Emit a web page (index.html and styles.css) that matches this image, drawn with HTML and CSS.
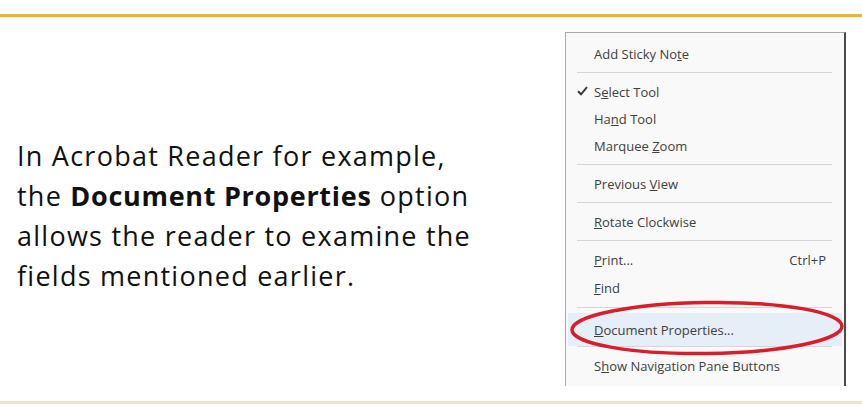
FILE: index.html
```html
<!DOCTYPE html>
<html>
<head>
<meta charset="utf-8">
<link rel="stylesheet" href="styles.css">
</head>
<body>
<div class="rule-top"></div>
<main class="slide">
  <section class="copy">
    <p>In Acrobat Reader for example,<br>the <b>Document Properties</b> option<br>allows the reader to examine the<br>fields mentioned earlier.</p>
  </section>
  <div class="menu">
    <div class="item"><span>Add Sticky No<u>t</u>e</span></div>
    <div class="sep"></div>
    <div class="item"><svg class="check" width="11" height="10" viewBox="0 0 11 10"><path d="M1 5.2 L4 8.3 L10 1.2" fill="none" stroke="#3a3a3a" stroke-width="2"/></svg><span>S<u>e</u>lect Tool</span></div>
    <div class="item"><span>Ha<u>n</u>d Tool</span></div>
    <div class="item"><span>Marquee <u>Z</u>oom</span></div>
    <div class="sep"></div>
    <div class="item"><span>Previous <u>V</u>iew</span></div>
    <div class="sep"></div>
    <div class="item"><span><u>R</u>otate Clockwise</span></div>
    <div class="sep"></div>
    <div class="item tall"><span><u>P</u>rint...</span><span class="key">Ctrl+P</span></div>
    <div class="item tall"><span><u>F</u>ind</span></div>
    <div class="sep"></div>
    <div class="item active"><span><u>D</u>ocument Properties...</span></div>
    <div class="sep flush"></div>
    <div class="item"><span>S<u>h</u>ow Navigation Pane Buttons</span></div>
    <svg class="ring" width="281" height="60" viewBox="0 0 281 60">
      <ellipse cx="138" cy="29" rx="135" ry="25.5" fill="none" stroke="#d81e2a" stroke-width="3.5" transform="rotate(-0.8 138 29)"/>
    </svg>
  </div>
</main>
<div class="rule-bottom"></div>
</body>
</html>
```

FILE: styles.css
```css
html, body {
  margin: 0;
  padding: 0;
  background: #ffffff;
}

body {
  width: 862px;
  height: 416px;
  overflow: hidden;
}

.rule-top {
  margin-top: 14px;
  height: 3px;
  background: #e7b628;
  box-shadow: 0 1px 2px rgba(240, 210, 120, 0.35);
}

.slide {
  display: flex;
  justify-content: space-between;
  height: 384px;
  box-sizing: border-box;
  padding: 15px 16px 15px 0;
}

.copy {
  display: flex;
  align-items: center;
  padding: 13px 0 0 17px;
  width: 520px;
}

.copy p {
  margin: 0;
  font-family: "Open Sans", "Noto Sans", sans-serif;
  font-size: 27px;
  letter-spacing: 1.25px;
  line-height: 40px;
  color: #111111;
  white-space: nowrap;
}

.copy b {
  font-weight: 700;
  letter-spacing: 0.7px;
}

.menu {
  position: relative;
  width: 278px;
  box-sizing: content-box;
  background: #f9f9f9;
  border-top: 1px solid #a9a9a9;
  border-left: 1px solid #a9a9a9;
  border-right: 2px solid #4b4b4b;
  padding: 7px 0 8px 0;
  font-family: "Open Sans", "Noto Sans", sans-serif;
  font-size: 13px;
  color: #404040;
}

.item {
  position: relative;
  display: flex;
  align-items: center;
  justify-content: space-between;
  height: 27px;
  padding: 0 16px 0 26px;
  margin: 0 2px;
  white-space: nowrap;
}

.item.tall {
  height: 28px;
}

.item.active {
  height: 33px;
  background: #e6eef8;
}

.key {
  color: #404040;
}

.check {
  position: absolute;
  left: 9px;
  top: 8px;
}

.sep {
  height: 1px;
  margin: 5px 12px 5px 11px;
  background: #d6d6d6;
}

.sep.flush {
  margin-top: 0;
}

.ring {
  position: absolute;
  left: 3px;
  top: 266px;
}

.rule-bottom {
  height: 3px;
  background: #f3e5c4;
}
```
